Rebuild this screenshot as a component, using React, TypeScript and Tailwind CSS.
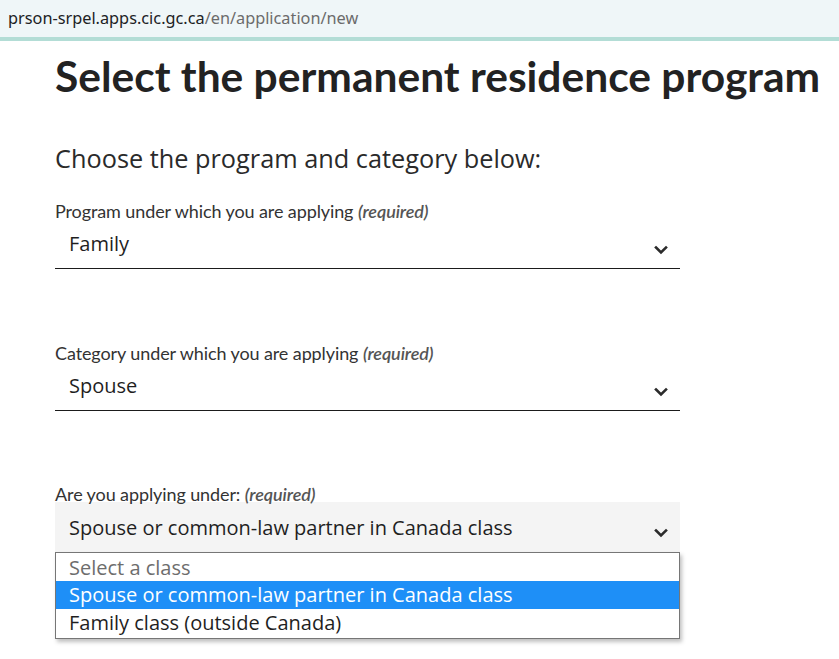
import React from "react";

function Chevron() {
  return (
    <svg width="14" height="10" viewBox="0 0 14 10" className="shrink-0">
      <path d="M2 2.5 L7 7.5 L12 2.5" fill="none" stroke="#2b2b2b" strokeWidth="2.6" strokeLinecap="square" />
    </svg>
  );
}

function Label({ text }: { text: string }) {
  return (
    <div className="text-[18px] leading-[22px] text-[#333] font-['Lato',sans-serif] tracking-[-0.1px]">
      {text} <i className="text-[#555] font-semibold">(required)</i>
    </div>
  );
}

function Select({ value }: { value: string }) {
  return (
    <div className="w-[625px] h-[47px] border-b border-[#1b1b1b] flex items-center justify-between pl-[14px] pr-[12px]">
      <span className="text-[20px] text-[#1f1f1f] font-['Open_Sans',sans-serif] -mt-[2px]">{value}</span>
      <span className="mt-[10px]"><Chevron /></span>
    </div>
  );
}

export default function App() {
  return (
    <div className="w-[839px] h-[659px] bg-white overflow-hidden relative">
      <div className="h-[41px] bg-[#eff6f8] border-b-[4px] border-[#b3ddd6] flex items-center pl-[8px] text-[16.3px] font-['Noto_Sans',sans-serif]">
        <span className="text-[#202124]">prson-srpel.apps.cic.gc.ca</span>
        <span className="text-[#6b6b6b]">/en/application/new</span>
      </div>
      <div className="pl-[55px]">
        <h1 className="mt-[9px] text-[42.5px] leading-[52px] font-bold text-[#222] font-['Lato',sans-serif] whitespace-nowrap">
          Select the permanent residence program
        </h1>
        <p className="mt-[40px] text-[25.3px] leading-[32px] text-[#2a2a2a] font-['Open_Sans',sans-serif]">
          Choose the program and category below:
        </p>
        <div className="mt-[26px]">
          <Label text="Program under which you are applying" />
          <Select value="Family" />
        </div>
        <div className="mt-[73px]">
          <Label text="Category under which you are applying" />
          <Select value="Spouse" />
        </div>
        <div className="mt-[72px] relative">
          <Label text="Are you applying under:" />
          <div className="w-[625px] h-[50px] bg-[#f4f4f4] flex items-center justify-between pl-[14px] pr-[12px] mt-[-3px]">
            <span className="text-[20px] text-[#1f1f1f] font-['Open_Sans',sans-serif] mt-[2px]">
              Spouse or common-law partner in Canada class
            </span>
            <span className="mt-[12px]"><Chevron /></span>
          </div>
          <div className="absolute left-0 top-[69px] w-[625px] bg-white border border-[#767676] shadow-[2px_3px_4px_rgba(0,0,0,0.25)] py-[1px] font-['Open_Sans',sans-serif] text-[20px]">
            <div className="h-[27px] leading-[27px] pl-[13px] text-[#6d6d6d]">Select a class</div>
            <div className="h-[28px] leading-[28px] pl-[13px] text-white bg-[#1e8ff7]">
              Spouse or common-law partner in Canada class
            </div>
            <div className="h-[28px] leading-[28px] pl-[13px] text-[#1f1f1f]">Family class (outside Canada)</div>
          </div>
        </div>
      </div>
    </div>
  );
}
